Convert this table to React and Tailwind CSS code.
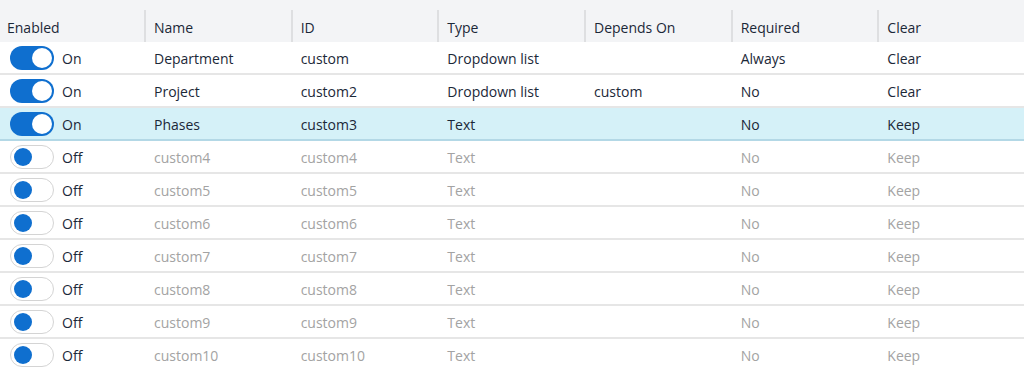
import React from 'react';

const columns = ['Enabled', 'Name', 'ID', 'Type', 'Depends On', 'Required', 'Clear'];

const rows = [
  { on: true, name: 'Department', id: 'custom', type: 'Dropdown list', depends: '', required: 'Always', clear: 'Clear' },
  { on: true, name: 'Project', id: 'custom2', type: 'Dropdown list', depends: 'custom', required: 'No', clear: 'Clear' },
  { on: true, name: 'Phases', id: 'custom3', type: 'Text', depends: '', required: 'No', clear: 'Keep', selected: true },
  ...[4, 5, 6, 7, 8, 9, 10].map((n) => ({
    on: false,
    name: `custom${n}`,
    id: `custom${n}`,
    type: 'Text',
    depends: '',
    required: 'No',
    clear: 'Keep',
  })),
];

const Toggle = ({ on }) =>
  on ? (
    <span className="flex h-[24px] w-[44px] items-center justify-end rounded-full bg-[#0f6fcf] pr-[2px]">
      <span className="h-[20px] w-[20px] rounded-full bg-white" />
    </span>
  ) : (
    <span className="flex h-[24px] w-[44px] items-center rounded-full border border-[#d4d4d4] bg-white pl-[3px]">
      <span className="h-[18px] w-[18px] rounded-full bg-[#0f6fcf]" />
    </span>
  );

export default function App() {
  return (
    <div className="w-[1024px] bg-white text-[14px] text-[#1b2838]" style={{ fontFamily: '"Open Sans", "Noto Sans", sans-serif' }}>
      {/* Header */}
      <div className="grid h-[42px] grid-cols-[144px_repeat(6,1fr)] items-end bg-[#f3f4f6]">
        {columns.map((col, i) => (
          <div
            key={col}
            className={`flex h-[32px] items-center pt-[2px] ${i > 0 ? 'border-l-2 border-[#dedfe1] pl-[8px]' : 'pl-[7px]'}`}
          >
            {col}
          </div>
        ))}
      </div>

      {rows.map((r) => {
        const muted = r.on ? 'text-[#1b2838]' : 'text-[#a3a3a3]';
        return (
          <div
            key={r.id}
            className={`grid h-[33px] grid-cols-[144px_repeat(6,1fr)] items-center border-b-2 pt-[1px] ${
              r.selected ? 'border-[#b3d8e6] bg-[#d5f1f8]' : 'border-[#e6e6e6]'
            }`}
          >
            <div className="flex items-center gap-[8px] pl-[10px]">
              <Toggle on={r.on} />
              <span>{r.on ? 'On' : 'Off'}</span>
            </div>
            <div className={`pl-[10px] ${muted}`}>{r.name}</div>
            <div className={`pl-[10px] ${muted}`}>{r.id}</div>
            <div className={`pl-[10px] ${muted}`}>{r.type}</div>
            <div className={`pl-[10px] ${muted}`}>{r.depends}</div>
            <div className={`pl-[10px] ${muted}`}>{r.required}</div>
            <div className={`pl-[10px] ${muted}`}>{r.clear}</div>
          </div>
        );
      })}
    </div>
  );
}
